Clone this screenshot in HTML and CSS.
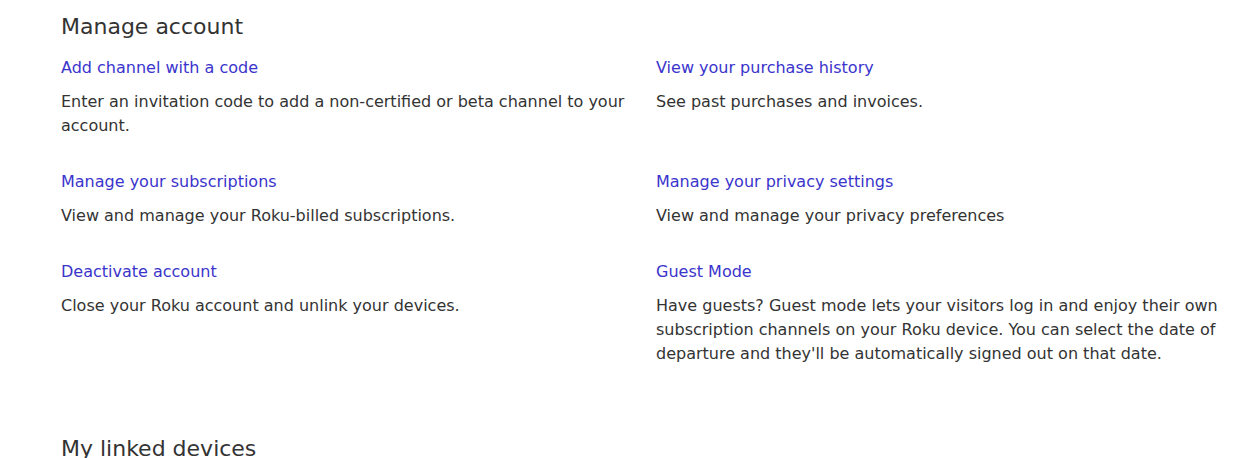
FILE: index.html
```html
<!DOCTYPE html>
<html>
<head>
  <title>Account</title>
  <link rel="stylesheet" href="styles.css">
</head>
<body>
  <div class="page">
    <section class="section">
      <h2 class="section-title">Manage account</h2>
      <div class="options">
        <div class="option">
          <a class="option-link" href="#">Add channel with a code</a>
          <p class="option-text">Enter an invitation code to add a non-certified or beta channel to your account.</p>
        </div>
        <div class="option">
          <a class="option-link" href="#">View your purchase history</a>
          <p class="option-text">See past purchases and invoices.</p>
        </div>
        <div class="option">
          <a class="option-link" href="#">Manage your subscriptions</a>
          <p class="option-text">View and manage your Roku-billed subscriptions.</p>
        </div>
        <div class="option">
          <a class="option-link" href="#">Manage your privacy settings</a>
          <p class="option-text">View and manage your privacy preferences</p>
        </div>
        <div class="option">
          <a class="option-link" href="#">Deactivate account</a>
          <p class="option-text">Close your Roku account and unlink your devices.</p>
        </div>
        <div class="option">
          <a class="option-link" href="#">Guest Mode</a>
          <p class="option-text">Have guests? Guest mode lets your visitors log in and enjoy their own subscription channels on your Roku device. You can select the date of departure and they'll be automatically signed out on that date.</p>
        </div>
      </div>
    </section>
    <section class="section">
      <h2 class="section-title">My linked devices</h2>
    </section>
  </div>
</body>
</html>
```

FILE: styles.css
```css
body {
  margin: 0;
  background-color: #ffffff;
  font-family: "DejaVu Sans", sans-serif;
  color: #333333;
}
.page {
  padding: 12px 3px 0 61px;
}
.section {
  margin-bottom: 68px;
}
.section-title {
  margin: 0;
  font-size: 22px;
  font-weight: normal;
  line-height: 30px;
  color: #333333;
}
.options {
  display: grid;
  grid-template-columns: 575px 575px;
  column-gap: 20px;
  row-gap: 32px;
  margin-top: 14px;
}
.option-link {
  display: block;
  font-size: 16px;
  line-height: 24px;
  color: #3a34cc;
  text-decoration: none;
}
.option-text {
  margin: 10px 0 0;
  font-size: 16px;
  line-height: 24px;
  color: #333333;
}
```
